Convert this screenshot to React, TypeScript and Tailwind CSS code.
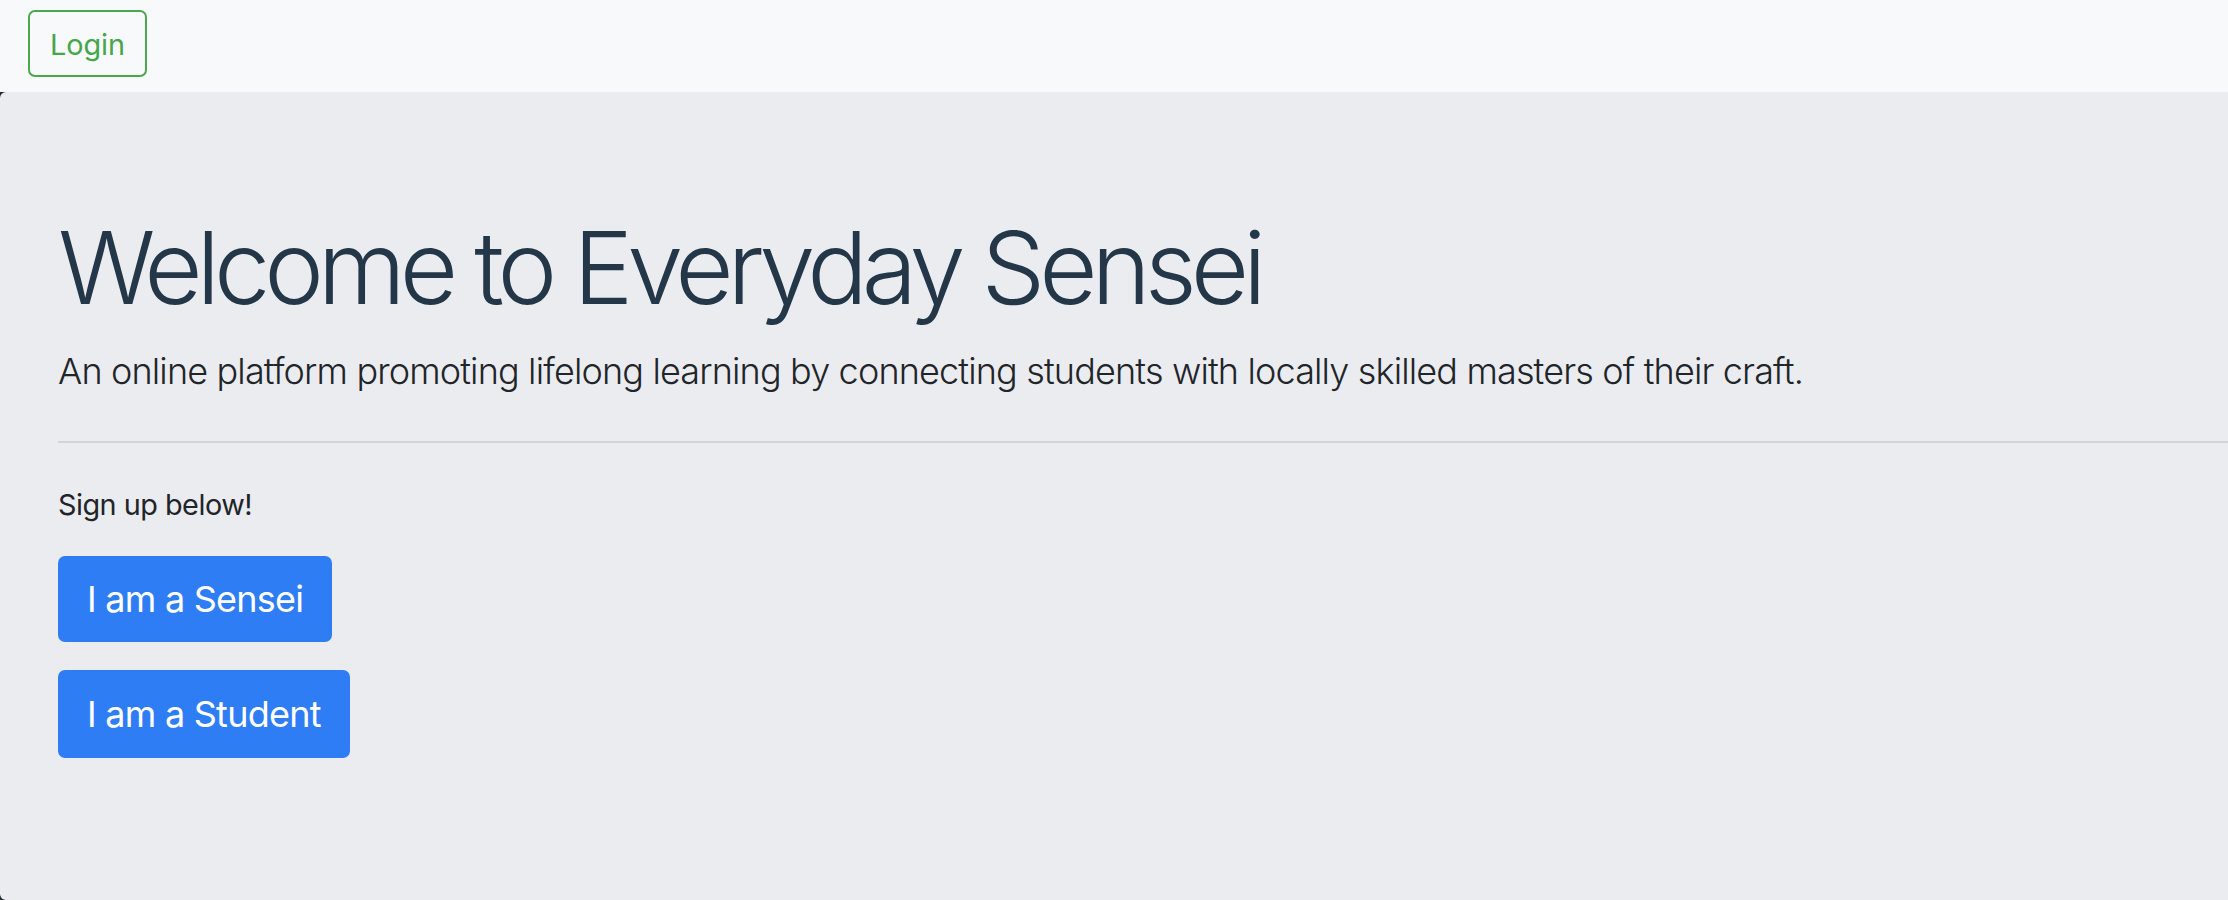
import React from "react";

export default function App() {
  return (
    <div className="w-[2228px] h-[900px] overflow-hidden bg-[#1e2a33] font-['Inter','Liberation_Sans',sans-serif]">
      <nav className="h-[92px] bg-[#f8f9fa] flex items-start pl-[28px] pt-[10px]">
        <button className="h-[67px] w-[119px] border-2 border-[#4aa84f] rounded-[7px] text-[28.8px] leading-none text-[#45a64a] bg-transparent pt-[3px]">
          Login
        </button>
      </nav>
      <main className="h-[808px] bg-[#ebecf0] rounded-l-[6px] pl-[58px] pt-[115px]">
        <h1 className="text-[100.8px] font-light leading-[121px] tracking-[-6.1px] text-[#243748] whitespace-nowrap">
          Welcome to Everyday Sensei
        </h1>
        <p className="mt-[16px] text-[36px] font-light leading-[54px] tracking-[-0.85px] text-[#212529] whitespace-nowrap">
          An online platform promoting lifelong learning by connecting students with locally skilled masters of their craft.
        </p>
        <hr className="mt-[43px] border-0 border-t-2 border-[#d3d4d8]" />
        <p className="mt-[40px] text-[28.8px] leading-[43px] tracking-[-0.5px] text-[#212529]">Sign up below!</p>
        <div className="mt-[30px] flex flex-col items-start gap-[28px]">
          <button className="h-[86px] px-[29px] rounded-[7px] bg-[#2f7df4] text-white text-[36px] leading-none tracking-[-0.75px]">
            I am a Sensei
          </button>
          <button className="h-[88px] px-[29px] rounded-[7px] bg-[#2f7df4] text-white text-[36px] leading-none tracking-[-0.75px]">
            I am a Student
          </button>
        </div>
      </main>
    </div>
  );
}
